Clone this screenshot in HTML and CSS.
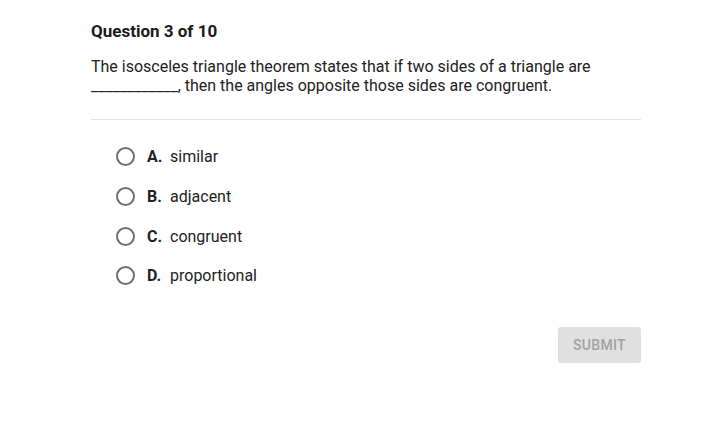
FILE: index.html
```html
<!DOCTYPE html>
<html>
<head>
<meta charset="utf-8">
<link rel="stylesheet" href="styles.css">
</head>
<body>
<div class="quiz">
  <h1 class="title">Question 3 of 10</h1>
  <p class="prompt">The isosceles triangle theorem states that if two sides of a triangle are ____________, then the angles opposite those sides are congruent.</p>
  <hr class="divider">
  <ul class="options">
    <li class="option"><span class="radio"></span><span class="letter">A.</span><span class="text">similar</span></li>
    <li class="option"><span class="radio"></span><span class="letter">B.</span><span class="text">adjacent</span></li>
    <li class="option"><span class="radio"></span><span class="letter">C.</span><span class="text">congruent</span></li>
    <li class="option"><span class="radio"></span><span class="letter">D.</span><span class="text">proportional</span></li>
  </ul>
  <div class="actions"><button class="submit">SUBMIT</button></div>
</div>
</body>
</html>
```
FILE: styles.css
```css
html, body { margin: 0; padding: 0; background: #fff; }
body { font-family: Roboto, "Noto Sans", sans-serif; color: #222; }
.quiz { width: 550px; margin-left: 91px; padding-top: 20px; }
.title { margin: 0; font-size: 17px; font-weight: 700; line-height: 22px; color: #1a1a1a; }
.prompt { margin: 15px 0 0; font-size: 16px; line-height: 19px; color: #222; width: 520px; }
.divider { margin: 24px 0 0; border: 0; border-top: 1px solid #e3e3e3; }
.options { list-style: none; margin: 0; padding: 17px 0 0 25px; }
.option { display: flex; align-items: center; height: 39.7px; font-size: 16px; }
.radio { width: 15px; height: 15px; border: 2px solid #6f6f6f; border-radius: 50%; flex: none; margin-right: 12px; }
.letter { font-weight: 700; width: 23px; }
.text { color: #222; }
.actions { display: flex; justify-content: flex-end; margin-top: 31px; }
.submit { width: 83px; height: 36px; background: #e0e0e0; color: #a3a3a3; border: 0; border-radius: 3px; font-family: Roboto, sans-serif; font-size: 14px; font-weight: 500; letter-spacing: 0.3px; }
```
